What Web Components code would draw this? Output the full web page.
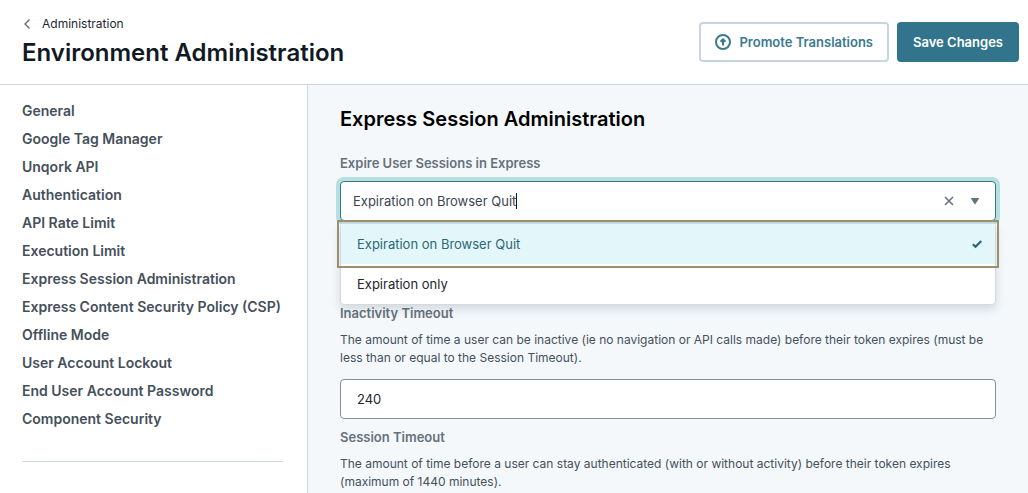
<!DOCTYPE html>
<html lang="en">
<head>
<meta charset="utf-8">
<title>Environment Administration</title>
<style>
    body {
        margin: 0;
        background: #ffffff;
        color: #3b4651;
        font: 14px/20px Inter, "Liberation Sans", sans-serif;
    }
</style>
</head>
<body>
<admin-page>
    <page-header slot="header" parent="Administration" heading="Environment Administration">
        <action-button>
            <svg slot="icon" width="16" height="16" viewBox="0 0 16 16" fill="none" stroke="currentColor" stroke-width="2" aria-hidden="true">
                <circle cx="8" cy="8" r="7"/>
                <path d="M8 11.500V6M5.500 7.800L8 5.300l2.500 2.500"/>
            </svg>
            Promote Translations
        </action-button>
        <action-button primary>Save Changes</action-button>
    </page-header>
    <side-nav slot="nav"></side-nav>
    <settings-section heading="Express Session Administration">
        <combo-box label="Expire User Sessions in Express" value="Expiration on Browser Quit" options="Expiration on Browser Quit|Expiration only"></combo-box>
        <text-field label="Inactivity Timeout" value="240">The amount of time a user can be inactive (ie no navigation or API calls made) before their token expires (must be less than or equal to the Session Timeout).</text-field>
        <text-field label="Session Timeout" value="1440">The amount of time before a user can stay authenticated (with or without activity) before their token expires (maximum of 1440 minutes).</text-field>
    </settings-section>
</admin-page>

<script>
function makeTemplate(html) {
    const template = document.createElement('template');
    template.innerHTML = html;
    return template;
}

const pageTemplate = makeTemplate(`
    <style>
        :host {
            display: flex;
            flex-direction: column;
            height: 100vh;
        }
        .body {
            flex: 1 1 auto;
            display: flex;
            min-height: 0;
        }
        main {
            flex: 1 1 auto;
            min-width: 0;
            overflow: hidden auto;
            scrollbar-width: none;
            background: #f4f8fb;
        }
    </style>
    <slot name="header"></slot>
    <div class="body">
        <slot name="nav"></slot>
        <main><slot></slot></main>
    </div>
`);

class AdminPage extends HTMLElement {
    constructor() {
        super();
        this.attachShadow({ mode: 'open' }).appendChild(pageTemplate.content.cloneNode(true));
    }
}

const headerTemplate = makeTemplate(`
    <style>
        :host {
            display: block;
            border-bottom: 1px solid #cdd6dc;
        }
        header {
            display: flex;
            align-items: center;
            justify-content: space-between;
            padding: 14px 9px 14px 22px;
        }
        .back {
            display: flex;
            align-items: center;
            gap: 10px;
            color: #1d2731;
            font-size: 12px;
            text-decoration: none;
        }
        .back svg {
            color: #5b6670;
        }
        h1 {
            margin: 2px 0 0;
            color: #111a24;
            font-size: 24px;
            font-weight: 600;
            line-height: 34px;
        }
        .actions {
            display: flex;
            gap: 8px;
        }
    </style>
    <header>
        <div>
            <a class="back" href="#">
                <svg width="10" height="10" viewBox="0 0 10 10" fill="none" stroke="currentColor" stroke-width="1.3" aria-hidden="true">
                    <path d="M7.500 .5L3 5l4.500 4.500"/>
                </svg>
                <span></span>
            </a>
            <h1></h1>
        </div>
        <div class="actions"><slot></slot></div>
    </header>
`);

class PageHeader extends HTMLElement {
    constructor() {
        super();
        const root = this.attachShadow({ mode: 'open' });
        root.appendChild(headerTemplate.content.cloneNode(true));
        root.querySelector('.back span').textContent = this.getAttribute('parent');
        root.querySelector('h1').textContent = this.getAttribute('heading');
    }
}

const buttonTemplate = makeTemplate(`
    <style>
        :host {
            display: block;
        }
        button {
            display: flex;
            align-items: center;
            gap: 8px;
            height: 40px;
            padding: 0 14px;
            border: 2px solid #c5d6de;
            border-radius: 4px;
            background: #ffffff;
            color: #3a7a90;
            font: inherit;
            font-size: 13px;
            font-weight: 600;
            white-space: nowrap;
            cursor: pointer;
        }
        :host([primary]) button {
            border-color: #31748c;
            background: #31748c;
            color: #ffffff;
        }
    </style>
    <button type="button"><slot name="icon"></slot><span><slot></slot></span></button>
`);

class ActionButton extends HTMLElement {
    constructor() {
        super();
        const root = this.attachShadow({ mode: 'open' });
        root.appendChild(buttonTemplate.content.cloneNode(true));
        if (!this.querySelector('[slot=icon]')) {
            root.querySelector('slot[name=icon]').remove();
        }
    }
}

const navTemplate = makeTemplate(`
    <style>
        :host {
            flex: 0 0 auto;
            box-sizing: border-box;
            width: 308px;
            padding: 16px 24px 0 22px;
            border-right: 1px solid #cdd6dc;
        }
        nav {
            display: flex;
            flex-direction: column;
            align-items: flex-start;
            gap: 8px;
            padding-bottom: 32px;
            border-bottom: 1px solid #cfd8dc;
        }
        a {
            color: #45505b;
            font-weight: 600;
            text-decoration: none;
            white-space: nowrap;
        }
    </style>
    <nav aria-label="Settings"></nav>
`);

const sections = [
    'General',
    'Google Tag Manager',
    'Unqork API',
    'Authentication',
    'API Rate Limit',
    'Execution Limit',
    'Express Session Administration',
    'Express Content Security Policy (CSP)',
    'Offline Mode',
    'User Account Lockout',
    'End User Account Password',
    'Component Security',
];

class SideNav extends HTMLElement {
    constructor() {
        super();
        const root = this.attachShadow({ mode: 'open' });
        root.appendChild(navTemplate.content.cloneNode(true));
        const nav = root.querySelector('nav');
        sections.forEach((name) => {
            const link = document.createElement('a');
            link.href = '#' + name.toLowerCase().replace(/\W+/g, '-');
            link.textContent = name;
            nav.appendChild(link);
        });
    }
}

const sectionTemplate = makeTemplate(`
    <style>
        :host {
            display: block;
            padding: 22px 32px;
        }
        h2 {
            margin: 0 0 22px;
            color: #000000;
            font-size: 20px;
            font-weight: 600;
            line-height: 24px;
        }
        .fields {
            display: flex;
            flex-direction: column;
            gap: 8px;
        }
    </style>
    <section>
        <h2></h2>
        <div class="fields"><slot></slot></div>
    </section>
`);

class SettingsSection extends HTMLElement {
    constructor() {
        super();
        const root = this.attachShadow({ mode: 'open' });
        root.appendChild(sectionTemplate.content.cloneNode(true));
        root.querySelector('h2').textContent = this.getAttribute('heading');
    }
}

const comboTemplate = makeTemplate(`
    <style>
        :host {
            display: block;
            padding-bottom: 74px;
        }
        label {
            display: block;
            margin-bottom: 8px;
            color: #66717c;
            font-size: 13px;
            font-weight: 600;
        }
        .combo {
            position: relative;
        }
        .control {
            display: flex;
            align-items: center;
            box-sizing: border-box;
            height: 40px;
            padding: 0 12px;
            border: 1px solid #2f7c88;
            border-radius: 4px;
            background: #ffffff;
            box-shadow: 0 0 0 4px #b7dfe3;
        }
        input {
            field-sizing: content;
            padding: 0;
            border: 0;
            outline: 0;
            background: none;
            color: #3b4651;
            caret-color: transparent;
            font: inherit;
            font-size: 13px;
        }
        .caret {
            width: 1px;
            height: 16px;
            margin-right: auto;
            background: #111a24;
        }
        button {
            display: flex;
            align-items: center;
            justify-content: center;
            width: 16px;
            height: 20px;
            padding: 0;
            border: 0;
            background: none;
            color: #66707b;
        }
        .toggle {
            margin-left: 10px;
        }
        ul {
            position: absolute;
            top: 42px;
            left: 0;
            right: 0;
            z-index: 1;
            margin: 0;
            padding: 0;
            border: 1px solid #d3dbe0;
            border-radius: 4px;
            background: #ffffff;
            box-shadow: 0 4px 10px rgba(30, 50, 60, 0.16);
            list-style: none;
        }
        li {
            display: flex;
            align-items: center;
            justify-content: space-between;
            height: 40px;
            padding: 0 12px 0 16px;
            color: #1d2731;
            font-size: 13px;
        }
        li[aria-selected=true] {
            outline: 2px solid #9b8f6c;
            outline-offset: 2px;
            background: #e3f6f9;
            color: #2b6878;
        }
        li svg {
            display: none;
        }
        li[aria-selected=true] svg {
            display: block;
        }
    </style>
    <label for="combo">Label</label>
    <div class="combo">
        <div class="control">
            <input id="combo" type="text" role="combobox" aria-expanded="true" aria-controls="menu" autocomplete="off">
            <span class="caret"></span>
            <button type="button" aria-label="Clear">
                <svg width="10" height="10" viewBox="0 0 10 10" stroke="currentColor" stroke-width="1.6" aria-hidden="true">
                    <path d="M1 1l8 8M9 1L1 9"/>
                </svg>
            </button>
            <button class="toggle" type="button" aria-label="Toggle options">
                <svg width="10" height="8" viewBox="0 0 10 8" fill="currentColor" aria-hidden="true">
                    <path d="M1.500 1h7q1 0 .4 .8L5.600 6.800q-.6 .7-1.200 0L1.100 1.800Q.5 1 1.500 1z"/>
                </svg>
            </button>
        </div>
        <ul id="menu" role="listbox"></ul>
    </div>
`);

const optionTemplate = makeTemplate(`
    <li role="option">
        <span></span>
        <svg width="12" height="10" viewBox="0 0 12 10" fill="none" stroke="currentColor" stroke-width="2.2" aria-hidden="true">
            <path d="M1.800 5.200l2.700 2.600L10.300 2"/>
        </svg>
    </li>
`);

class ComboBox extends HTMLElement {
    constructor() {
        super();
        this._shadowRoot = this.attachShadow({ mode: 'open' });
        this._shadowRoot.appendChild(comboTemplate.content.cloneNode(true));

        this.$input = this._shadowRoot.querySelector('input');
        this.$menu = this._shadowRoot.querySelector('ul');
        this._shadowRoot.querySelector('label').textContent = this.getAttribute('label');
        this.$input.value = this.getAttribute('value');

        this.getAttribute('options').split('|').forEach((text) => {
            const item = optionTemplate.content.cloneNode(true);
            item.querySelector('span').textContent = text;
            item.querySelector('li').setAttribute('aria-selected', text === this.$input.value);
            this.$menu.appendChild(item);
        });

        this._shadowRoot.querySelector('button').addEventListener('click', this._onClear.bind(this));
        this._shadowRoot.querySelector('.toggle').addEventListener('click', this._onToggle.bind(this));
    }

    _onClear() {
        this.$input.value = '';
        this.$input.focus();
    }

    _onToggle() {
        this.$menu.hidden = !this.$menu.hidden;
        this.$menu.style.display = this.$menu.hidden ? 'none' : '';
        this.$input.setAttribute('aria-expanded', !this.$menu.hidden);
    }
}

const fieldTemplate = makeTemplate(`
    <style>
        :host {
            display: block;
        }
        label {
            display: block;
            color: #66717c;
            font-size: 13px;
            font-weight: 600;
        }
        p {
            margin: 8px 0 12px;
            color: #45505b;
            font-size: 12px;
            line-height: 18px;
        }
        input {
            display: block;
            box-sizing: border-box;
            width: 100%;
            height: 40px;
            padding: 0 16px;
            border: 1px solid #858f98;
            border-radius: 4px;
            background: #ffffff;
            color: #1d2731;
            font: inherit;
            font-size: 13px;
        }
    </style>
    <label for="field"></label>
    <p id="hint"><slot></slot></p>
    <input id="field" type="text" inputmode="numeric" aria-describedby="hint">
`);

class TextField extends HTMLElement {
    constructor() {
        super();
        const root = this.attachShadow({ mode: 'open' });
        root.appendChild(fieldTemplate.content.cloneNode(true));
        root.querySelector('label').textContent = this.getAttribute('label');
        root.querySelector('input').value = this.getAttribute('value');
    }
}

customElements.define('admin-page', AdminPage);
customElements.define('page-header', PageHeader);
customElements.define('action-button', ActionButton);
customElements.define('side-nav', SideNav);
customElements.define('settings-section', SettingsSection);
customElements.define('combo-box', ComboBox);
customElements.define('text-field', TextField);
</script>
</body>
</html>
